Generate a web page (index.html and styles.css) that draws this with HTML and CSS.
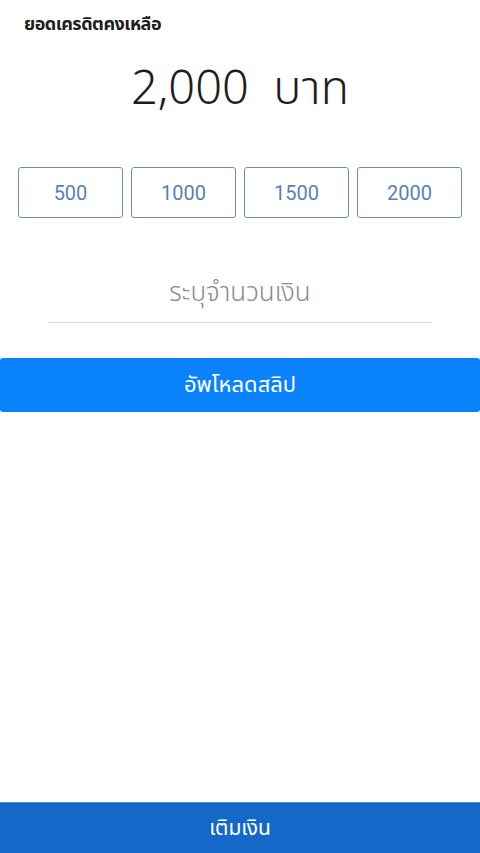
FILE: index.html
```html
<!DOCTYPE html>
<html lang="th">
<head>
<meta charset="utf-8">
<title>เติมเงิน</title>
<link rel="stylesheet" href="styles.css">
</head>
<body>
<div class="page">
  <main class="content">
    <h1 class="title">ยอดเครดิตคงเหลือ</h1>
    <div class="balance">2,000&nbsp; บาท</div>
    <div class="amounts">
      <button class="amount">500</button>
      <button class="amount">1000</button>
      <button class="amount">1500</button>
      <button class="amount">2000</button>
    </div>
    <div class="field">
      <input class="input" type="text" placeholder="ระบุจำนวนเงิน">
    </div>
    <button class="upload">อัพโหลดสลิป</button>
  </main>
  <footer class="footer">เติมเงิน</footer>
</div>
</body>
</html>
```
FILE: styles.css
```css
* { box-sizing: border-box; }
html, body { margin: 0; padding: 0; height: 100%; background: #fff; }
body {
  font-family: "Noto Sans Thai", "Noto Sans Thai UI", "Noto Sans", "DejaVu Sans", sans-serif;
  color: #222;
}
.page {
  height: 853px;
  display: flex;
  flex-direction: column;
}
.content { flex: 1; display: flex; flex-direction: column; }
.title {
  margin: 11px 0 0 24px;
  font-size: 18px;
  font-weight: 700;
  line-height: 28px;
  color: #1e1e1e;
  letter-spacing: -0.5px;
}
.balance {
  margin-top: 23px;
  text-align: center;
  font-size: 47px;
  font-weight: 300;
  line-height: 56px;
  color: #1e1e1e;
}
.amounts {
  margin: 49px 18px 0 18px;
  display: grid;
  grid-template-columns: repeat(4, 105px);
  justify-content: space-between;
}
.amount {
  height: 51px;
  background: #fff;
  border: 1.5px solid #6e8fb3;
  border-radius: 3px;
  color: #5b82ad;
  font-family: Roboto, "Noto Sans", sans-serif;
  font-size: 20px;
  padding: 0;
}
.field {
  margin: 50px 48px 0;
  border-bottom: 1px solid #dcdcdc;
}
.input {
  width: 100%;
  height: 54px;
  border: none;
  outline: none;
  text-align: center;
  font-family: inherit;
  font-size: 26px;
  font-weight: 300;
  color: #333;
  background: transparent;
  padding: 0 0 4px;
}
.input::placeholder { color: #8a8a8a; }
.upload {
  margin-top: 35px;
  height: 54px;
  width: 100%;
  border: none;
  border-radius: 3px;
  background: #0a82fc;
  color: #fff;
  font-family: inherit;
  font-size: 22px;
}
.footer {
  height: 51px;
  background: #1469c8;
  color: #fff;
  display: flex;
  align-items: center;
  justify-content: center;
  font-size: 21px;
  border-top: 1px solid #4a8ee0;
}
```
